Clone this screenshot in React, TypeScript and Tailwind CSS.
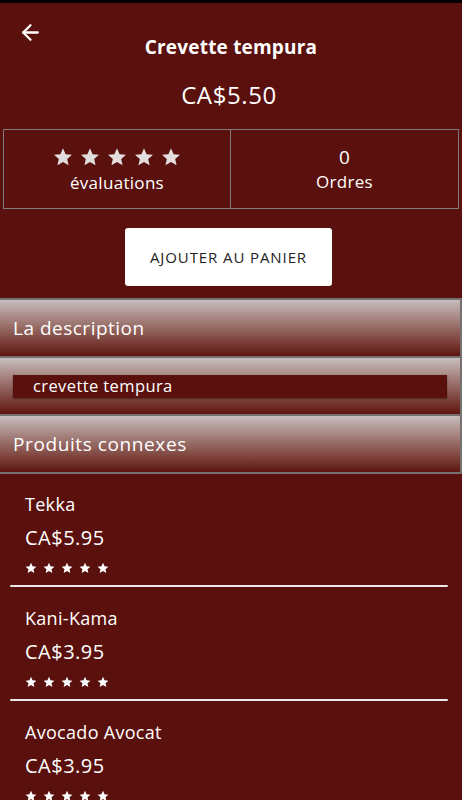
import { ArrowLeft } from "lucide-react";

const related = [
  { name: "Tekka", price: "CA$5.95" },
  { name: "Kani-Kama", price: "CA$3.95" },
  { name: "Avocado Avocat", price: "CA$3.95" },
];

const Stars = ({ big }: { big?: boolean }) => (
  <div className={big ? "flex gap-[7px] text-[#e2dede]" : "flex gap-[6px] text-white"}>
    {[0, 1, 2, 3, 4].map((i) => (
      <svg key={i} viewBox="0 0 24 24" className={big ? "w-[20px] h-[20px]" : "w-[12px] h-[12px]"}>
        <path
          fill="currentColor"
          d="M12 1.5l3.1 7.1 7.7.7-5.8 5.1 1.7 7.6L12 18l-6.7 4 1.7-7.6-5.8-5.1 7.7-.7z"
        />
      </svg>
    ))}
  </div>
);

const barCls =
  "border-b-2 border-r-2 border-[#767070] bg-gradient-to-b from-[#c6bebe] to-[#5e130f] flex items-center px-[13px]";

export default function App() {
  return (
    <div
      className="w-[462px] min-h-[800px] bg-[#5a100c] text-white overflow-hidden"
      style={{ fontFamily: "'Open Sans', 'Noto Sans', sans-serif" }}
    >
      <div className="h-[3px] bg-black" />
      <div className="relative">
        <ArrowLeft className="absolute left-[18px] top-[17px] w-[25px] h-[25px]" strokeWidth={2.2} />
        <h1 className="pt-[30px] text-center text-[19px] font-bold leading-[28px] tracking-[0.2px]">
          Crevette tempura
        </h1>
        <div className="mt-[18px] text-center text-[24px] leading-[32px] tracking-[0.6px] pr-[4px]">CA$5.50</div>
      </div>

      <div className="mx-[3px] mt-[18px] h-[80px] grid grid-cols-2 border border-[#807a7a]">
        <div className="flex flex-col items-center justify-center border-r border-[#807a7a] pt-[2px]">
          <Stars big />
          <div className="mt-[5px] text-[17px] leading-[22px] tracking-[0.3px]">évaluations</div>
        </div>
        <div className="flex flex-col items-center justify-center">
          <div className="text-[19px] leading-[24px]">0</div>
          <div className="mt-[2px] text-[17px] leading-[22px] tracking-[0.3px]">Ordres</div>
        </div>
      </div>

      <div className="flex justify-center mt-[19px] pr-[5px]">
        <button className="w-[207px] h-[58px] bg-white rounded-[3px] text-[#222] text-[15px] tracking-[0.9px]">
          AJOUTER AU PANIER
        </button>
      </div>

      <div className="mt-[12px]">
        <div className={`h-[60px] border-t-2 ${barCls}`}>
          <span className="text-[19px] tracking-[0.5px]">La description</span>
        </div>
        <div className={`h-[58px] ${barCls}`}>
          <div className="w-full h-[23px] bg-[#5a100c] flex items-center pl-[20px] text-[16.5px] tracking-[0.4px] shadow-[0_1px_2px_rgba(0,0,0,0.4)]">
            crevette tempura
          </div>
        </div>
        <div className={`h-[58px] ${barCls}`}>
          <span className="text-[19px] tracking-[0.6px]">Produits connexes</span>
        </div>
      </div>

      <div className="pt-[17px]">
        {related.map((p, i) => (
          <div key={p.name}>
            <div className="px-[25px] pb-[11px]">
              <div className="text-[18px] leading-[26px] tracking-[0.3px]">{p.name}</div>
              <div className="mt-[8px] text-[20px] leading-[26px] tracking-[0.5px]">{p.price}</div>
              <div className="mt-[11px]">
                <Stars />
              </div>
            </div>
            {i < related.length - 1 && (
              <div className="ml-[10px] mr-[14px] h-[2px] bg-[#ece8e8] rounded mb-[18px]" />
            )}
          </div>
        ))}
      </div>
    </div>
  );
}
